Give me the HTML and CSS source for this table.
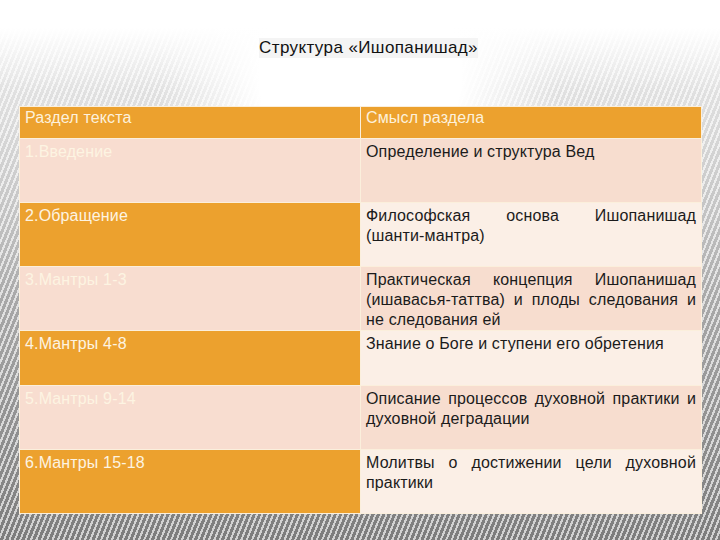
FILE: index.html
```html
<!DOCTYPE html>
<html lang="ru">
<head>
<meta charset="utf-8">
<title>Структура «Ишопанишад»</title>
<link rel="stylesheet" href="styles.css">
</head>
<body>
<div class="slide">
  <h1 class="title">Структура «Ишопанишад»</h1>
  <table class="grid">
    <tr class="head">
      <th class="c-left">Раздел текста</th>
      <th class="c-right">Смысл раздела</th>
    </tr>
    <tr class="r r-tall">
      <td class="c-left peach">1.Введение</td>
      <td class="c-right peach-r">Определение и структура Вед</td>
    </tr>
    <tr class="r r-tall">
      <td class="c-left orange">2.Обращение</td>
      <td class="c-right cream">Философская основа Ишопанишад (шанти-мантра)</td>
    </tr>
    <tr class="r r-tall">
      <td class="c-left peach">3.Мантры 1-3</td>
      <td class="c-right peach-r">Практическая концепция Ишопанишад (ишавасья-таттва) и плоды следования и не следования ей</td>
    </tr>
    <tr class="r r-short">
      <td class="c-left orange">4.Мантры 4-8</td>
      <td class="c-right cream">Знание о Боге и ступени его обретения</td>
    </tr>
    <tr class="r r-tall">
      <td class="c-left peach">5.Мантры 9-14</td>
      <td class="c-right peach-r">Описание процессов духовной практики и духовной деградации</td>
    </tr>
    <tr class="r r-tall">
      <td class="c-left orange">6.Мантры 15-18</td>
      <td class="c-right cream">Молитвы о достижении цели духовной практики</td>
    </tr>
  </table>
</div>
</body>
</html>
```

FILE: styles.css
```css
html, body {
  margin: 0;
  padding: 0;
}

body {
  width: 720px;
  height: 540px;
  overflow: hidden;
  font-family: "Liberation Sans", Arial, sans-serif;
  background:
    radial-gradient(ellipse 28% 38% at 50% 14%, #fff 50%, rgba(255,255,255,0) 100%),
    linear-gradient(to bottom, #fff 0, #fff 28px, rgba(255,255,255,0.45) 90px, rgba(255,255,255,0) 300px),
    repeating-linear-gradient(112deg, rgba(255,255,255,0.65) 0 2px, rgba(255,255,255,0) 2px 5px),
    linear-gradient(to bottom, #d6d6d6 0, #a8a8a8 300px, #7c7c7c 540px);
}

.slide {
  display: flex;
  flex-direction: column;
  align-items: center;
  height: 540px;
}

.title {
  margin: 38px 0 0 17px;
  font-size: 17px;
  letter-spacing: 0.4px;
  font-weight: normal;
  line-height: 20px;
  color: #111;
  background: #f4f4f4;
}

.grid {
  margin-top: 48px;
  width: 683px;
  margin-left: 1px;
  border-collapse: collapse;
  table-layout: fixed;
  font-size: 16px;
  letter-spacing: 0.15px;
  line-height: 20px;
  border: 1px solid #fbf0d8;
}

.grid th,
.grid td {
  border: 1px solid #fbefdc;
  padding: 1px 5px 0 5px;
  vertical-align: top;
  font-weight: normal;
  text-align: left;
}

.grid .c-left {
  width: 330px;
  color: #fdf4e2;
}

.grid .c-right {
  text-align: justify;
  color: #1b1b1b;
}

.grid .head th {
  height: 30px;
  background: #eca12e;
  color: #fdf1dc;
}

.r td {
  padding-top: 3px;
}

.r-tall td {
  height: 60px;
}

.r-short td {
  height: 51px;
}

.orange {
  background: #eca12e;
}

.peach {
  background: #f8ddd0;
}

.peach-r {
  background: #f7ddcf;
}

.cream {
  background: #fbefe6;
}
```
